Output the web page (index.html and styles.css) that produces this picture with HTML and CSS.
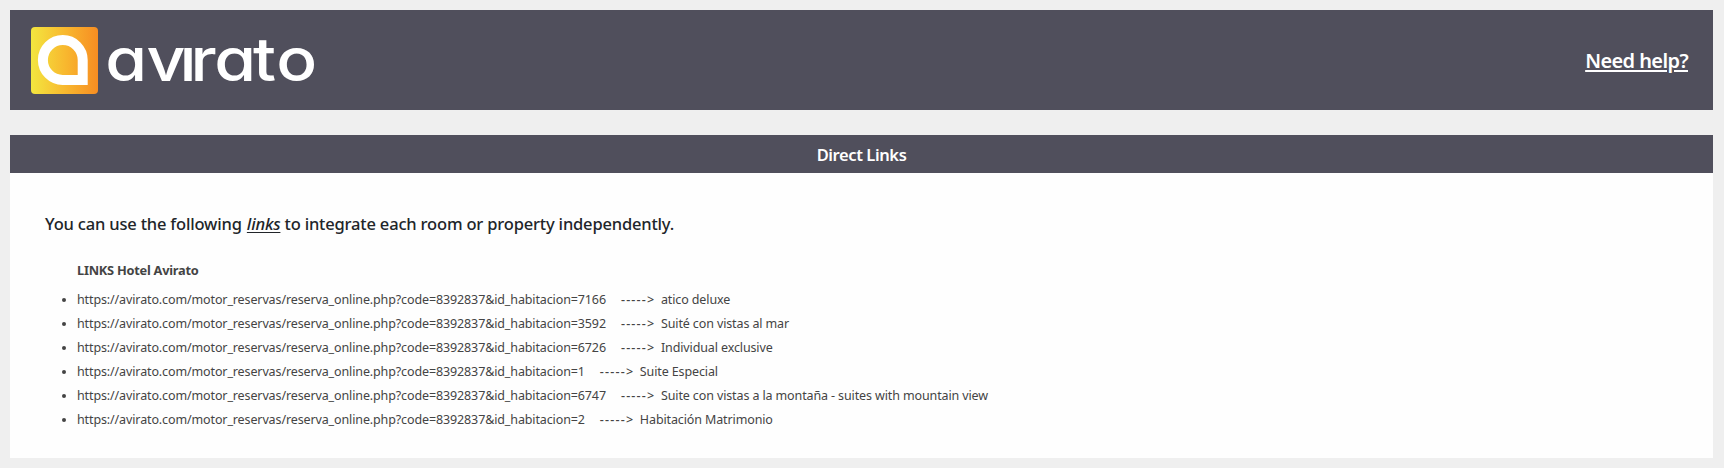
FILE: index.html
```html
<!DOCTYPE html>
<html lang="en">
<head>
<meta charset="utf-8">
<title>Avirato - Direct Links</title>
<link rel="stylesheet" href="styles.css">
</head>
<body>
<header class="topbar">
  <svg class="logo" width="300" height="80" viewBox="20 20 300 80" role="img" aria-label="avirato">
    <defs>
      <linearGradient id="mark" x1="0" y1="0" x2="1" y2="0">
        <stop offset="0" stop-color="#f3e63f"/>
        <stop offset="0.5" stop-color="#f8b92f"/>
        <stop offset="1" stop-color="#f78d22"/>
      </linearGradient>
      <clipPath id="nodot"><path d="M100 45H250V25H320V90H100Z"/></clipPath>
    </defs>
    <rect x="31" y="27" width="67" height="67" rx="4" fill="url(#mark)"/>
    <path d="M82.700 79.900H62.700A19.900 19.900 0 1 1 82.700 60Z" fill="none" stroke="#fff" stroke-width="10"/>
    <g clip-path="url(#nodot)">
      <text class="wordmark" transform="scale(1.130 1)" y="81" x="93.200 129.600 158.800 168.500 189.600 223.800 244.400">avirato</text>
    </g>
  </svg>
  <a class="help"><span>Need help?</span></a>
</header>
<main class="panel">
  <h1 class="panel-title"><span>Direct Links</span></h1>
  <div class="panel-body">
    <p class="intro"><span>You can use the following <em>links</em> to integrate each room or property independently.</span></p>
    <h2 class="list-title"><span>LINKS Hotel Avirato</span></h2>
    <ul class="links">
      <li><span class="url">https://avirato.com/motor_reservas/reserva_online.php?code=8392837&amp;id_habitacion=7166</span><b>-----&gt;</b><span class="room">atico deluxe</span></li>
      <li><span class="url">https://avirato.com/motor_reservas/reserva_online.php?code=8392837&amp;id_habitacion=3592</span><b>-----&gt;</b><span class="room">Suité con vistas al mar</span></li>
      <li><span class="url">https://avirato.com/motor_reservas/reserva_online.php?code=8392837&amp;id_habitacion=6726</span><b>-----&gt;</b><span class="room">Individual exclusive</span></li>
      <li><span class="url">https://avirato.com/motor_reservas/reserva_online.php?code=8392837&amp;id_habitacion=1</span><b>-----&gt;</b><span class="room">Suite Especial</span></li>
      <li><span class="url">https://avirato.com/motor_reservas/reserva_online.php?code=8392837&amp;id_habitacion=6747</span><b>-----&gt;</b><span class="room">Suite con vistas a la montaña - suites with mountain view</span></li>
      <li><span class="url">https://avirato.com/motor_reservas/reserva_online.php?code=8392837&amp;id_habitacion=2</span><b>-----&gt;</b><span class="room">Habitación Matrimonio</span></li>
    </ul>
  </div>
</main>
</body>
</html>
```
FILE: styles.css
```css
* { box-sizing: border-box; }
body {
  margin: 0;
  min-height: 468px;
  padding: 10px 11px 9px 10px;
  background: #efefef;
  font-family: "Noto Sans", "Open Sans", sans-serif;
  color: #444;
}
.topbar {
  height: 100px;
  padding: 0 25px 0 10px;
  display: flex;
  align-items: center;
  justify-content: space-between;
  background: #504f5c;
}
.logo { display: block; }
.wordmark {
  font-family: Inter, sans-serif;
  font-size: 60px;
  font-weight: 550;
  font-feature-settings: "cv11" 1;
  fill: #fff;
}
.help {
  padding-top: 2px;
  color: #fff;
  font-size: 20px;
  font-weight: 600;
  line-height: 28px;
  letter-spacing: -0.6px;
  text-decoration: underline;
  text-decoration-thickness: 2px;
  text-underline-offset: 2px;
}
.panel {
  margin-top: 25px;
  height: 323px;
  background: #fefefe;
}
.panel-title {
  margin: 0;
  height: 38px;
  line-height: 40px;
  background: #504f5c;
  color: #fff;
  font-size: 16.5px;
  font-weight: 600;
  letter-spacing: -0.4px;
  text-align: center;
}
.panel-body { padding: 38px 35px 0; }
.intro {
  margin: 0;
  font-size: 16.5px;
  font-weight: 500;
  line-height: 25px;
  letter-spacing: -0.18px;
  color: #212529;
}
.intro em {
  margin-left: 1px;
  text-decoration: underline;
  text-underline-offset: 2px;
}
.list-title {
  margin: 22px 0 6px 32px;
  font-size: 12.8px;
  font-weight: 700;
  line-height: 24px;
  letter-spacing: -0.25px;
}
.links {
  margin: 0;
  padding: 0 0 0 32px;
  font-size: 12.5px;
  line-height: 24px;
  letter-spacing: -0.12px;
}
.links li { white-space: nowrap; }
.links b {
  display: inline-block;
  width: 34px;
  margin: 0 6px 0 15px;
  font-weight: 500;
  letter-spacing: 1.2px;
}
```
